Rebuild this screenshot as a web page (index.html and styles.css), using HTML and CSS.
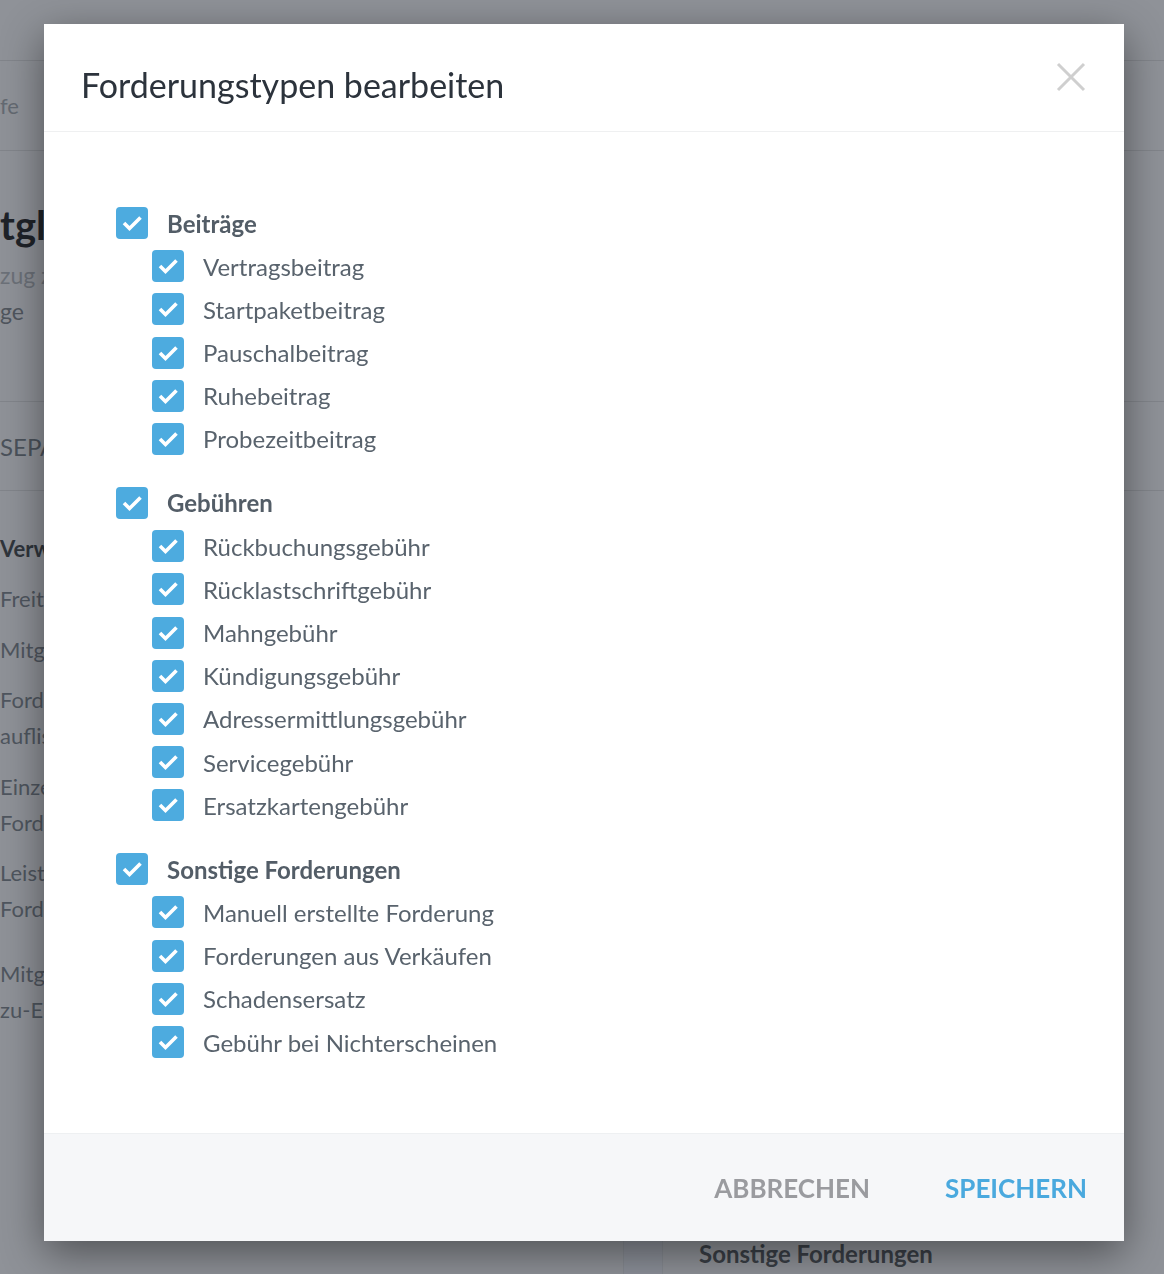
FILE: index.html
```html
<!DOCTYPE html>
<html lang="de">
<head>
    <meta charset="UTF-8">
    <meta name="viewport" content="width=device-width, initial-scale=1.0">
    <title>Forderungstypen bearbeiten</title>
    <link rel="stylesheet" href="styles.css">
</head>
<body>
    <!-- page behind the dialog, dimmed; only its left edge shows -->
    <div class="page">
        <div class="topbar"></div>
        <div class="subbar"><span>fe</span></div>
        <div class="intro">
            <div class="intro-title">tglieder</div>
            <div class="intro-text">zug zu Forderungen</div>
            <div class="intro-text intro-text-dark">ge</div>
        </div>
        <div class="tabs"><span>SEPA-Lastschrift</span></div>
        <div class="settings">
            <div class="settings-head">Verwendungszweck</div>
            <div class="settings-item">Freitext</div>
            <div class="settings-item">Mitgliedsnummer</div>
            <div class="settings-item">Forderungen<br>auflisten</div>
            <div class="settings-item">Einzelne<br>Forderungen</div>
            <div class="settings-item">Leistungszeitraum<br>Forderungen</div>
            <div class="settings-item settings-item-last">Mitglieder<br>zu-Einzug</div>
        </div>
        <div class="columns">
            <div class="col-left"></div>
            <div class="col-band"></div>
            <div class="col-right">Sonstige Forderungen</div>
        </div>
    </div>

    <div class="overlay">
        <div class="modal">
            <div class="modal-header">
                <h1 class="modal-title">Forderungstypen bearbeiten</h1>
                <button class="close" aria-label="Schließen">
                    <svg width="30" height="30" viewBox="0 0 30 30">
                        <path d="M2 2 L28 28 M28 2 L2 28" stroke="#cfcfcf" stroke-width="3" fill="none"/>
                    </svg>
                </button>
            </div>

            <div class="modal-body" id="typeList">
                <!-- groups are rendered here -->
            </div>

            <div class="modal-footer">
                <button class="btn btn-cancel">Abbrechen</button>
                <button class="btn btn-save">Speichern</button>
            </div>
        </div>
    </div>

    <script>
        const groups = [
            {
                name: "Beiträge",
                items: ["Vertragsbeitrag", "Startpaketbeitrag", "Pauschalbeitrag", "Ruhebeitrag", "Probezeitbeitrag"]
            },
            {
                name: "Gebühren",
                items: ["Rückbuchungsgebühr", "Rücklastschriftgebühr", "Mahngebühr", "Kündigungsgebühr",
                        "Adressermittlungsgebühr", "Servicegebühr", "Ersatzkartengebühr"]
            },
            {
                name: "Sonstige Forderungen",
                items: ["Manuell erstellte Forderung", "Forderungen aus Verkäufen", "Schadensersatz", "Gebühr bei Nichterscheinen"]
            }
        ];

        const checkIcon = `
            <svg class="check" width="32" height="32" viewBox="0 0 32 32">
                <path d="M8 16 L13.5 21.5 L24.5 10.5" stroke="#fff" stroke-width="3.6" fill="none"/>
            </svg>`;

        function row(label, isGroup) {
            return `
                <label class="row ${isGroup ? "row-group" : ""}">
                    <span class="box">${checkIcon}</span>
                    <span class="row-label">${label}</span>
                </label>`;
        }

        const list = document.getElementById("typeList");
        groups.forEach(group => {
            const el = document.createElement("div");
            el.className = "group";
            el.innerHTML = row(group.name, true) +
                `<div class="children">${group.items.map(item => row(item, false)).join("")}</div>`;
            list.appendChild(el);
        });
    </script>
</body>
</html>
```

FILE: styles.css
```css
html, body {
    margin: 0;
    height: 100%;
}
body {
    font-family: Lato, "Liberation Sans", sans-serif;
    background-color: #8f9298;
    overflow: hidden;
}

/* dimmed page behind */
.page {
    color: #4f565f;
    white-space: nowrap;
}
.topbar {
    height: 60px;
    border-bottom: 1px solid #82858b;
}
.subbar {
    height: 89px;
    display: flex;
    align-items: center;
    border-bottom: 1px solid #82858b;
    font-size: 22px;
    color: #646a72;
}
.intro {
    height: 251px;
    border-bottom: 1px solid #82858b;
    padding-top: 52px;
    box-sizing: border-box;
}
.intro-title {
    font-size: 40px;
    font-weight: 700;
    color: #1f2329;
    line-height: 44px;
}
.intro-text {
    font-size: 23px;
    color: #6c7179;
    margin-top: 16px;
    line-height: 24px;
}
.intro-text-dark {
    color: #50565e;
    margin-top: 12px;
}
.tabs {
    height: 88px;
    display: flex;
    align-items: center;
    border-bottom: 1px solid #82858b;
    font-size: 24px;
    color: #4b525b;
}
.settings {
    padding-top: 40px;
    font-size: 22px;
    line-height: 36px;
}
.settings-head {
    font-weight: 700;
    color: #2f353c;
    margin-bottom: 14px;
}
.settings-item {
    margin-bottom: 14.5px;
}
.settings-item-last {
    margin-top: 29px;
}
.columns {
    display: flex;
    margin-top: 211px;
    height: 60px;
}
.col-left {
    width: 623px;
}
.col-band {
    width: 38px;
    border-left: 1px solid #868a91;
    border-right: 1px solid #868a91;
    background-color: #8c9099;
}
.col-right {
    padding-left: 36px;
    font-size: 24px;
    line-height: 30px;
    font-weight: 700;
    color: #3a3f46;
}

/* dialog */
.overlay {
    position: fixed;
    inset: 0;
    padding: 24px 0 0 44px;
}
.modal {
    width: 1080px;
    height: 1217px;
    background-color: #fff;
    display: flex;
    flex-direction: column;
    box-shadow: 0 12px 40px rgba(0, 0, 0, 0.45);
}
.modal-header {
    height: 107px;
    border-bottom: 1px solid #eff0f1;
    display: flex;
    justify-content: space-between;
    align-items: flex-start;
    padding: 0 38px 0 37px;
}
.modal-title {
    margin: 41px 0 0 0;
    font-size: 34px;
    font-weight: 400;
    line-height: 40px;
    color: #2c333c;
}
.close {
    margin-top: 38px;
    padding: 0;
    border: none;
    background: none;
    cursor: pointer;
}
.modal-body {
    flex: 1;
    padding: 75px 0 0 72px;
}
.group + .group {
    margin-top: 32px;
}
.children {
    margin-left: 36px;
}
.row {
    display: flex;
    align-items: center;
    height: 32px;
    margin-bottom: 11.2px;
    cursor: pointer;
}
.box {
    width: 32px;
    height: 32px;
    border-radius: 4px;
    background-color: #4dabdf;
    flex-shrink: 0;
}
.check {
    display: block;
}
.row-label {
    margin-left: 19px;
    font-size: 24px;
    color: #59636d;
}
.row-group .row-label {
    font-weight: 700;
    color: #535d67;
}
.modal-footer {
    height: 107px;
    border-top: 1px solid #eef0f2;
    background-color: #f6f7f9;
    display: flex;
    justify-content: flex-end;
    align-items: center;
    gap: 75px;
    padding-right: 37px;
}
.btn {
    border: none;
    background: none;
    padding: 0;
    font-family: inherit;
    font-size: 26px;
    font-weight: 700;
    text-transform: uppercase;
    cursor: pointer;
}
.btn-cancel {
    color: #9a9b9f;
}
.btn-save {
    color: #4aa9de;
}
```
